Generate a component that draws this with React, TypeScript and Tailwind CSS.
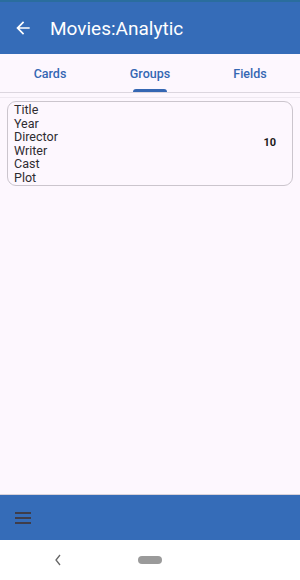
import React from "react";

export default function App() {
  const fields = ["Title", "Year", "Director", "Writer", "Cast", "Plot"];
  return (
    <div
      className="w-[300px] h-[580px] flex flex-col bg-[#fdf7fe] overflow-hidden"
      style={{ fontFamily: "Roboto, 'Noto Sans', sans-serif" }}
    >
      <div className="h-[2px] bg-[#2a6d9e]" />
      <div className="h-[52px] bg-[#356cb8] flex items-center px-[13px]">
        <svg width="20" height="20" viewBox="0 0 24 24" className="shrink-0">
          <path d="M20 11H7.83l5.59-5.59L12 4l-8 8 8 8 1.41-1.41L7.83 13H20v-2z" fill="#ffffff" />
        </svg>
        <span className="ml-[17px] text-white text-[19px] leading-none">Movies:Analytic</span>
      </div>
      <div className="h-[39px] flex border-b border-[#dcd6df] relative">
        {["Cards", "Groups", "Fields"].map((t, i) => (
          <div key={t} className="flex-1 flex items-center justify-center relative pt-[3px]">
            <span className="text-[12.5px] font-medium text-[#3567b3]">{t}</span>
            {i === 1 && (
              <div className="absolute bottom-0 left-1/2 -translate-x-1/2 w-[34px] h-[3px] rounded-t-[3px] bg-[#3567b3]" />
            )}
          </div>
        ))}
      </div>
      <div className="h-[1px] bg-[#efe9f1] mt-[4px]" />
      <div className="px-[7px] pt-[3px]">
        <div className="border border-[#cbc5cd] rounded-[9px] flex items-center pl-[6px] pr-[16px] py-[1px]">
          <div className="flex-1 flex flex-col">
            {fields.map((f) => (
              <span key={f} className="text-[12.5px] leading-[13.5px] text-[#2e2c31]">
                {f}
              </span>
            ))}
          </div>
          <span className="text-[11px] font-bold text-[#1d1b20]">10</span>
        </div>
      </div>
      <div className="flex-1" />
      <div className="h-[1px] bg-[#d8d2da]" />
      <div className="h-[45px] bg-[#356cb8] flex items-center px-[15px]">
        <svg width="17" height="12" viewBox="0 0 17 12">
          <rect x="0" y="0" width="16" height="2" fill="#3f3d4a" />
          <rect x="0" y="5" width="16" height="2" fill="#3f3d4a" />
          <rect x="0" y="10" width="16" height="2" fill="#3f3d4a" />
        </svg>
      </div>
      <div className="h-[40px] bg-white flex items-center relative">
        <svg width="8" height="12" viewBox="0 0 8 12" className="absolute left-[54px] top-[14px]">
          <path d="M6 1 L2 6 L6 11" stroke="#666" strokeWidth="1.3" fill="none" />
        </svg>
        <div className="absolute left-[138px] top-[16px] w-[24px] h-[8px] rounded-full bg-[#9a9a9a]" />
      </div>
    </div>
  );
}
